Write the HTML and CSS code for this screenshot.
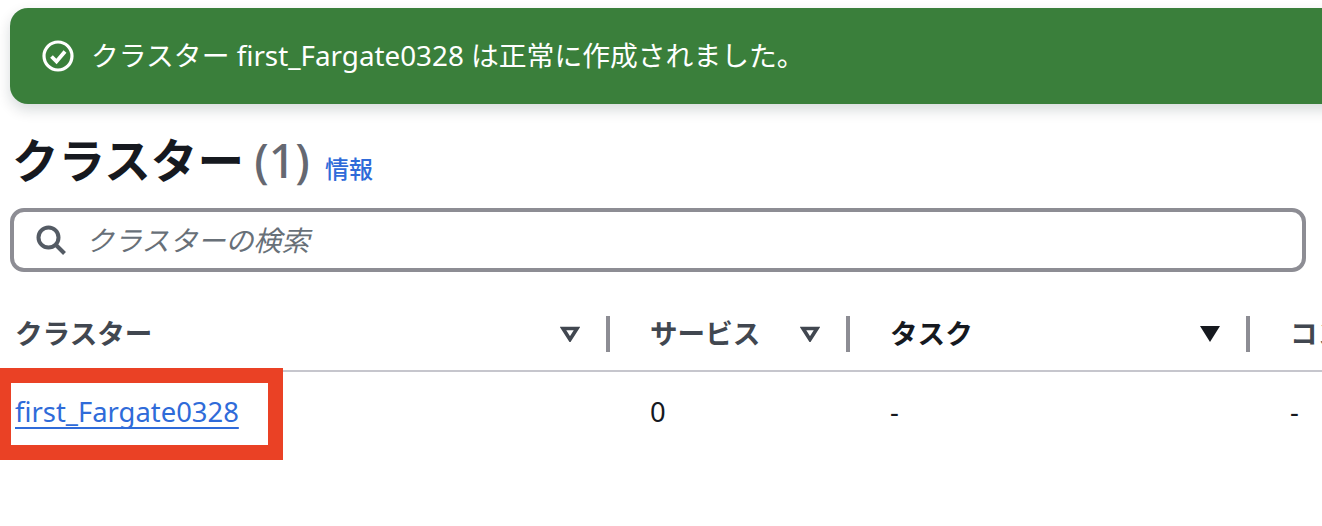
FILE: index.html
```html
<!DOCTYPE html>
<html lang="ja">
<head>
  <meta charset="UTF-8">
  <meta name="viewport" content="width=device-width, initial-scale=1.0">
  <title>クラスター</title>
  <link rel="stylesheet" href="styles.css">
</head>
<body>
  <div class="flash">
    <svg class="flash-icon" viewBox="0 0 32 32" width="32" height="32" fill="none" stroke="#fff">
      <circle cx="16" cy="16" r="14" stroke-width="3.2"/>
      <path d="M9.5 16.5l5 5 8.5-10" stroke-width="3.8"/>
    </svg>
    <span class="flash-text">クラスター first_Fargate0328 は正常に作成されました。</span>
  </div>

  <div class="page-title">
    <h1>クラスター <span class="count">(1)</span></h1>
    <a class="info-link" href="#">情報</a>
  </div>

  <div class="search">
    <svg viewBox="0 0 32 32" width="32" height="32" fill="none" stroke="#545b64" stroke-width="4">
      <circle cx="13.5" cy="13.5" r="10"/>
      <path d="M20.5 20.5l9 9"/>
    </svg>
    <span class="placeholder">クラスターの検索</span>
  </div>

  <div class="table">
    <div class="th">
      <span class="th-label">クラスター</span>
      <svg class="sort" viewBox="0 0 20 16" width="20" height="16"><path d="M3 2.5h14l-7 11z" fill="none" stroke="#414750" stroke-width="3.6"/></svg>
    </div>
    <div class="th">
      <span class="th-label">サービス</span>
      <svg class="sort" viewBox="0 0 20 16" width="20" height="16"><path d="M3 2.5h14l-7 11z" fill="none" stroke="#414750" stroke-width="3.6"/></svg>
    </div>
    <div class="th th-active">
      <span class="th-label">タスク</span>
      <svg class="sort" viewBox="0 0 20 16" width="20" height="16"><path d="M0 0h20l-10 16z" fill="#16191f"/></svg>
    </div>
    <div class="th th-last">
      <span class="th-label">コンテナインスタンス</span>
    </div>

    <div class="td td-first"><a href="#">first_Fargate0328</a></div>
    <div class="td">0</div>
    <div class="td">-</div>
    <div class="td">-</div>
  </div>

  <div class="highlight"></div>
</body>
</html>
```

FILE: styles.css
```css
html, body {
  margin: 0;
  height: 526px;
  overflow: hidden;
  background-color: #fff;
}
body {
  position: relative;
  font-family: "Noto Sans", "Noto Sans CJK JP", sans-serif;
  color: #16191f;
}
.flash {
  display: flex;
  align-items: center;
  gap: 17px;
  height: 96px;
  margin: 8px -40px 0 10px;
  padding-left: 32px;
  background-color: #3a7f3b;
  border-radius: 18px;
  box-shadow: 0 6px 14px rgba(0, 28, 36, 0.16);
  color: #fff;
  font-size: 27.8px;
  white-space: nowrap;
}
.flash-icon {
  flex: none;
}
.flash-text {
  margin-bottom: 4px;
}
.page-title {
  display: flex;
  align-items: baseline;
  gap: 18px;
  height: 104px;
  padding-left: 12px;
}
h1 {
  margin: 0;
  font-size: 46.6px;
  line-height: 112px;
  font-weight: 700;
  word-spacing: -2px;
}
.count {
  font-weight: 500;
  color: #656871;
}
.info-link {
  color: #2f6bd9;
  font-size: 24px;
  font-weight: 500;
  text-decoration: none;
  margin-left: -3px;
}
.search {
  box-sizing: border-box;
  display: flex;
  align-items: center;
  gap: 19px;
  width: 1296px;
  height: 64px;
  margin-left: 10px;
  padding-left: 21px;
  border: 4px solid #8d8d94;
  border-radius: 14px;
}
.placeholder {
  font-size: 28px;
  font-style: italic;
  color: #687078;
  margin-bottom: 2px;
}
.table {
  display: grid;
  grid-template-columns: 610px 240px 400px 300px;
  grid-template-rows: 72px 88px;
  margin-top: 28px;
}
.th {
  display: flex;
  align-items: center;
  padding: 0 0 2px 40px;
  border-bottom: 2px solid #c6c6cd;
  color: #414750;
  font-size: 27.6px;
  font-weight: 600;
  white-space: nowrap;
}
.th:first-child {
  padding-left: 15px;
}
.th-label {
  margin-bottom: 4px;
}
.th::after {
  content: "";
  width: 4px;
  height: 36px;
  margin-left: 26px;
  background-color: #8d8d94;
}
.th .sort {
  margin-left: auto;
}
.th-active {
  color: #16191f;
}
.th-last::after {
  display: none;
}
.td {
  display: flex;
  align-items: center;
  padding-left: 40px;
  font-size: 27.4px;
  padding-bottom: 10px;
}
.td-first {
  padding-left: 15px;
}
.td a {
  color: #2f6bd9;
  text-underline-offset: 5px;
  text-decoration-skip-ink: none;
  text-decoration-thickness: 2px;
}
/* red annotation box drawn over the screenshot */
.highlight {
  position: absolute;
  left: -4px;
  top: 368px;
  width: 257px;
  height: 62px;
  border: 15px solid #ea4125;
}
```
